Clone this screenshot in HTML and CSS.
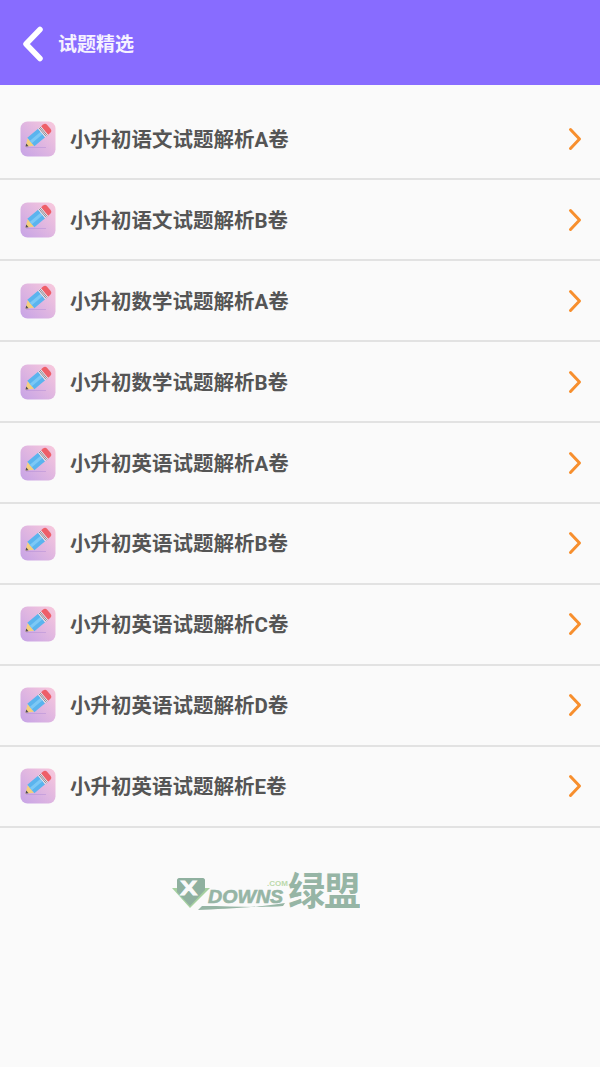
FILE: index.html
```html
<!DOCTYPE html>
<html lang="zh">
<head>
<meta charset="utf-8">
<title>试题精选</title>
<link rel="stylesheet" href="styles.css">
</head>
<body>
<svg class="defs" width="0" height="0" aria-hidden="true">
  <defs>
    <linearGradient id="bg" x1="1" y1="0" x2="0" y2="1"><stop offset="0" stop-color="#f9c9dc"/><stop offset="1" stop-color="#c6a3e6"/></linearGradient>
    <symbol id="pencil" viewBox="0 0 36 36">
      <rect x="0.5" y="0.5" width="35" height="35" rx="7" fill="url(#bg)"/>
      <path d="M6 26.500h20" stroke="#b48fd8" stroke-width="1" opacity="0.5"/>
      <g transform="translate(5.500 25.500) rotate(-40)">
        <path d="M0 0L7-5V5z" fill="#f4cf7e"/>
        <path d="M0 0L2.500-1.800V1.800z" fill="#4c4a55"/>
        <rect x="7" y="-5.500" width="14" height="11" fill="#5ab4ee"/>
        <rect x="7" y="-1.500" width="14" height="3" fill="#7cc8f5"/>
        <rect x="21" y="-5.500" width="4" height="11" fill="#ece8ee"/>
        <path d="M22.300-5.500v11M23.700-5.500v11" stroke="#6d6a75" stroke-width="0.7"/>
        <path d="M25-5.500h2.500c2 0 3 1 3 3v5c0 2-1 3-3 3H25z" fill="#ee5f68"/>
      </g>
    </symbol>
    <symbol id="chev" viewBox="0 0 14 24">
      <path d="M2.500 2.500L11.500 12 2.500 21.500" fill="none" stroke="#f78f2e" stroke-width="3" stroke-linecap="round" stroke-linejoin="round"/>
    </symbol>
  </defs>
</svg>
<header class="top">
  <svg class="back" viewBox="0 0 22 36" aria-hidden="true"><path d="M18 3.500L4 18l14 14.500" fill="none" stroke="#fff" stroke-width="5.500" stroke-linecap="round" stroke-linejoin="round"/></svg>
  <h1 class="title">试题精选</h1>
</header>
<ul class="list">
  <li class="row"><svg class="ico"><use href="#pencil"/></svg><span class="name">小升初语文试题解析A卷</span><svg class="arrow"><use href="#chev"/></svg></li>
  <li class="row"><svg class="ico"><use href="#pencil"/></svg><span class="name">小升初语文试题解析B卷</span><svg class="arrow"><use href="#chev"/></svg></li>
  <li class="row"><svg class="ico"><use href="#pencil"/></svg><span class="name">小升初数学试题解析A卷</span><svg class="arrow"><use href="#chev"/></svg></li>
  <li class="row"><svg class="ico"><use href="#pencil"/></svg><span class="name">小升初数学试题解析B卷</span><svg class="arrow"><use href="#chev"/></svg></li>
  <li class="row"><svg class="ico"><use href="#pencil"/></svg><span class="name">小升初英语试题解析A卷</span><svg class="arrow"><use href="#chev"/></svg></li>
  <li class="row"><svg class="ico"><use href="#pencil"/></svg><span class="name">小升初英语试题解析B卷</span><svg class="arrow"><use href="#chev"/></svg></li>
  <li class="row"><svg class="ico"><use href="#pencil"/></svg><span class="name">小升初英语试题解析C卷</span><svg class="arrow"><use href="#chev"/></svg></li>
  <li class="row"><svg class="ico"><use href="#pencil"/></svg><span class="name">小升初英语试题解析D卷</span><svg class="arrow"><use href="#chev"/></svg></li>
  <li class="row"><svg class="ico"><use href="#pencil"/></svg><span class="name">小升初英语试题解析E卷</span><svg class="arrow"><use href="#chev"/></svg></li>
</ul>
<div class="wm">
  <svg class="shield" viewBox="0 0 190 42" aria-hidden="true">
    <path d="M0 18h6l12 14 13-14h7L18 38z" fill="#a6d0a0"/>
    <path d="M5 10c0-1 1-2 2-2h24c1 0 2 1 2 2v10L18 36 5 22z" fill="#8fb09f"/>
    <path d="M26 40C50 39 90 37 113 33l-2 3C90 38 60 36 30 36z" fill="#96b5a5"/>
  </svg>
  <span class="x">X</span>
  <span class="downs">DOWNS</span>
  <span class="com">.COM</span>
  <span class="lm">绿盟</span>
</div>
</body>
</html>
```
FILE: styles.css
```css
* { box-sizing: border-box; }
html, body { margin: 0; padding: 0; }
body {
  position: relative;
  width: 600px;
  height: 1067px;
  overflow: hidden;
  background: #fafafa;
  font-family: Roboto, "Noto Sans CJK SC", sans-serif;
}
.defs { position: absolute; }
.top {
  height: 85px;
  background: #886cff;
  display: flex;
  align-items: center;
  padding: 2px 0 0 22px;
  gap: 14px;
}
.back { width: 22px; height: 36px; }
.title { margin: 2px 0 0; font-size: 19px; font-weight: 700; color: #f6f2ff; line-height: 1; }
.list { list-style: none; margin: 0; padding: 14.500px 0 0; }
.row {
  height: 80.9px;
  display: flex;
  align-items: center;
  padding: 0 18px 0 20px;
  border-bottom: 2px solid #e2e2e2;
}
.ico { width: 36px; height: 36px; flex: none; }
.name {
  margin: 0 0 2px 14px;
  flex: 1;
  font-size: 20.500px;
  font-weight: 700;
  color: #555;
}
.arrow { width: 14px; height: 24px; flex: none; }
.wm {
  position: absolute;
  left: 172px;
  top: 870px;
  width: 190px;
  height: 42px;
  color: #96b5a5;
}
.shield { position: absolute; left: 0; top: 0; width: 190px; height: 42px; }
.x { position: absolute; left: 10px; top: 10px; font: 700 20px/17px "Liberation Sans", sans-serif; color: #fafafa; transform: scaleX(1.300); -webkit-text-stroke: 0.8px #fafafa; }
.downs { position: absolute; left: 36px; top: 18px; font: italic 700 18.500px/17px "Liberation Sans", sans-serif; transform: scaleX(1.060); transform-origin: left center; -webkit-text-stroke: 0.6px #96b5a5; }
.com { position: absolute; left: 95px; top: 11px; font: 700 8px/6px "Liberation Sans", sans-serif; color: #bcd9ac; }
.lm { position: absolute; left: 116px; top: -1px; font: 700 37px/40px "Noto Sans CJK SC", sans-serif; letter-spacing: -1px; transform: scaleY(1.040); transform-origin: left bottom; }
```
